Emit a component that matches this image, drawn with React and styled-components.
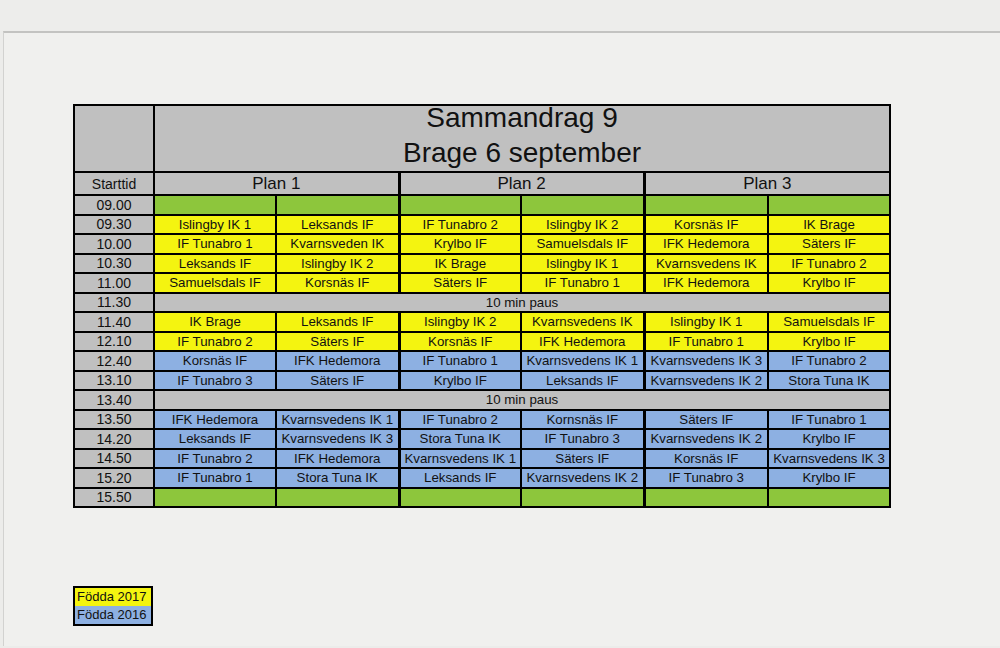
import styled, { createGlobalStyle } from "styled-components";

const COLORS = {
  gray: "#c0c0c0",
  yellow: "#f4f410",
  green: "#8dc63c",
  blue: "#8db0e2",
};

const schedule = [
  { time: "09.00", kind: "green", teams: ["", "", "", "", "", ""] },
  { time: "09.30", kind: "yellow", teams: ["Islingby IK 1", "Leksands IF", "IF Tunabro 2", "Islingby IK 2", "Korsnäs IF", "IK Brage"] },
  { time: "10.00", kind: "yellow", teams: ["IF Tunabro 1", "Kvarnsveden IK", "Krylbo IF", "Samuelsdals IF", "IFK Hedemora", "Säters IF"] },
  { time: "10.30", kind: "yellow", teams: ["Leksands IF", "Islingby IK 2", "IK Brage", "Islingby IK 1", "Kvarnsvedens IK", "IF Tunabro 2"] },
  { time: "11.00", kind: "yellow", teams: ["Samuelsdals IF", "Korsnäs IF", "Säters IF", "IF Tunabro 1", "IFK Hedemora", "Krylbo IF"] },
  { time: "11.30", kind: "pause" },
  { time: "11.40", kind: "yellow", teams: ["IK Brage", "Leksands IF", "Islingby IK 2", "Kvarnsvedens IK", "Islingby IK 1", "Samuelsdals IF"] },
  { time: "12.10", kind: "yellow", teams: ["IF Tunabro 2", "Säters IF", "Korsnäs IF", "IFK Hedemora", "IF Tunabro 1", "Krylbo IF"] },
  { time: "12.40", kind: "blue", teams: ["Korsnäs IF", "IFK Hedemora", "IF Tunabro 1", "Kvarnsvedens IK 1", "Kvarnsvedens IK 3", "IF Tunabro 2"] },
  { time: "13.10", kind: "blue", teams: ["IF Tunabro 3", "Säters IF", "Krylbo IF", "Leksands IF", "Kvarnsvedens IK 2", "Stora Tuna IK"] },
  { time: "13.40", kind: "pause" },
  { time: "13.50", kind: "blue", teams: ["IFK Hedemora", "Kvarnsvedens IK 1", "IF Tunabro 2", "Kornsnäs IF", "Säters IF", "IF Tunabro 1"] },
  { time: "14.20", kind: "blue", teams: ["Leksands IF", "Kvarnsvedens IK 3", "Stora Tuna IK", "IF Tunabro 3", "Kvarnsvedens IK 2", "Krylbo IF"] },
  { time: "14.50", kind: "blue", teams: ["IF Tunabro 2", "IFK Hedemora", "Kvarnsvedens IK 1", "Säters IF", "Korsnäs IF", "Kvarnsvedens IK 3"] },
  { time: "15.20", kind: "blue", teams: ["IF Tunabro 1", "Stora Tuna IK", "Leksands IF", "Kvarnsvedens IK 2", "IF Tunabro 3", "Krylbo IF"] },
  { time: "15.50", kind: "green", teams: ["", "", "", "", "", ""] },
];

const App = () => {
  return (
    <>
      <GlobalStyle />
      <TopBar />
      <Page>
        <Sheet>
          <colgroup>
            <col style={{ width: "80px" }} />
            <col style={{ width: "122px" }} />
            <col style={{ width: "123px" }} />
            <col style={{ width: "122px" }} />
            <col style={{ width: "123px" }} />
            <col style={{ width: "124px" }} />
            <col style={{ width: "122px" }} />
          </colgroup>
          <tbody>
            <TitleRow>
              <Cell $fill="gray" />
              <Cell $fill="gray" colSpan={6}>
                <TitleBox>
                  <div>Sammandrag 9</div>
                  <div>Brage 6 september</div>
                </TitleBox>
              </Cell>
            </TitleRow>
            <HeadRow>
              <Cell $fill="gray" $small>Starttid</Cell>
              <Cell $fill="gray" colSpan={2}>Plan 1</Cell>
              <Cell $fill="gray" colSpan={2} $thick>Plan 2</Cell>
              <Cell $fill="gray" colSpan={2} $thick>Plan 3</Cell>
            </HeadRow>
            {schedule.map((row) => (
              <DataRow key={row.time}>
                <Cell $fill="gray" $time>{row.time}</Cell>
                {row.kind === "pause" ? (
                  <Cell $fill="gray" colSpan={6}>10 min paus</Cell>
                ) : (
                  row.teams.map((team, i) => (
                    <Cell key={i} $fill={row.kind} $thick={i === 2 || i === 4}>
                      {team}
                    </Cell>
                  ))
                )}
              </DataRow>
            ))}
          </tbody>
        </Sheet>
        <Legend>
          <LegendRow $fill="yellow">Födda 2017</LegendRow>
          <LegendRow $fill="blue">Födda 2016</LegendRow>
        </Legend>
      </Page>
    </>
  );
};

const GlobalStyle = createGlobalStyle`
  body {
    margin: 0;
    background: #ececea;
    font-family: "Liberation Sans", Arial, sans-serif;
    color: #111;
  }
`;

const TopBar = styled.div`
  height: 31px;
  background: #ededeb;
`;

const Page = styled.div`
  margin-left: 3px;
  min-height: 615px;
  border-top: 2px solid #c3c3c1;
  border-left: 1px solid #d2d2d0;
  background: #f0f0ee;
  padding: 71px 0 0 69px;
  box-sizing: border-box;
`;

const Sheet = styled.table`
  border-collapse: collapse;
  table-layout: fixed;
  width: 816px;
  border: 2px solid #000;
`;

const TitleRow = styled.tr`
  height: 67px;
`;

const HeadRow = styled.tr`
  height: 23px;
  font-size: 17px;
`;

const DataRow = styled.tr`
  height: 19.5px;
  font-size: 13.3px;
`;

const Cell = styled.td`
  padding: 0;
  border: 2px solid #000;
  border-left-width: ${(p) => (p.$thick ? "3px" : "2px")};
  background: ${(p) => COLORS[p.$fill]};
  text-align: center;
  vertical-align: middle;
  white-space: nowrap;
  overflow: hidden;
  line-height: 1;
  font-size: ${(p) => (p.$small ? "14px" : p.$time ? "14px" : "inherit")};
`;

const TitleBox = styled.div`
  height: 65px;
  overflow: hidden;
  display: flex;
  flex-direction: column;
  justify-content: flex-end;
  padding-bottom: 1px;
  box-sizing: border-box;
  font-size: 28px;
  line-height: 35px;
  text-align: center;
`;

const Legend = styled.div`
  margin-top: 78px;
  width: 76px;
  border: 2px solid #000;
`;

const LegendRow = styled.div`
  height: 18px;
  line-height: 18px;
  padding-left: 2px;
  font-size: 13px;
  background: ${(p) => COLORS[p.$fill]};
`;

export default App;
